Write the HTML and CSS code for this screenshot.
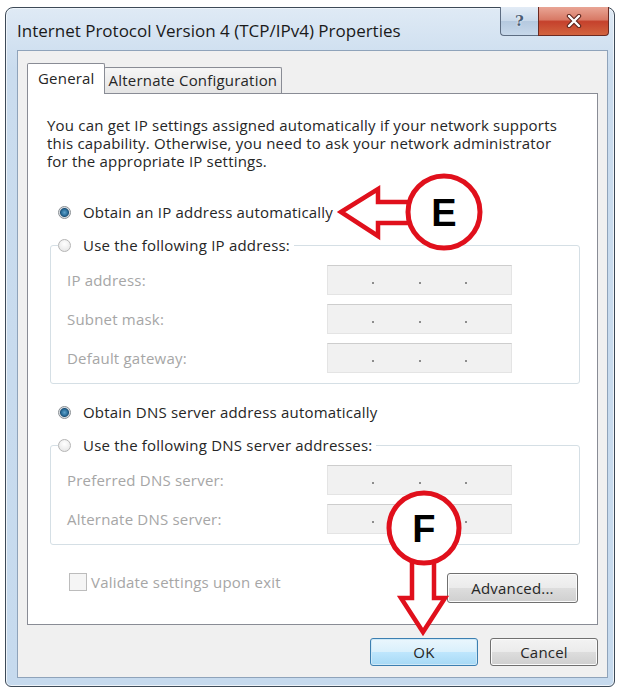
FILE: index.html
```html
<!DOCTYPE html>
<html>
<head>
<meta charset="utf-8">
<link rel="stylesheet" href="styles.css">
</head>
<body>
<div class="window">
  <div class="titlebar">
    <span class="title">Internet Protocol Version 4 (TCP/IPv4) Properties</span>
    <div class="caption">
      <div class="cbtn help"><span>?</span></div>
      <div class="cbtn close">
        <svg width="16" height="14" viewBox="0 0 16 14"><path d="M3 2 L13 12 M13 2 L3 12" stroke="#5a231c" stroke-width="4.4" stroke-linecap="round"/><path d="M3 2 L13 12 M13 2 L3 12" stroke="#fff" stroke-width="2.4" stroke-linecap="round"/></svg>
      </div>
    </div>
  </div>
  <div class="client">
    <div class="tabs">
      <div class="tab active">General</div>
      <div class="tab">Alternate Configuration</div>
    </div>
    <div class="panel">
      <p class="intro">You can get IP settings assigned automatically if your network supports<br>this capability. Otherwise, you need to ask your network administrator<br>for the appropriate IP settings.</p>
      <div class="opt"><span class="radio on"></span>Obtain an IP address automatically</div>
      <fieldset class="group">
        <legend><span class="radio"></span>Use the following IP address:</legend>
        <div class="row first"><span class="lbl">IP address:</span><div class="ip"><i></i><i></i><i></i></div></div>
        <div class="row"><span class="lbl">Subnet mask:</span><div class="ip"><i></i><i></i><i></i></div></div>
        <div class="row"><span class="lbl">Default gateway:</span><div class="ip"><i></i><i></i><i></i></div></div>
      </fieldset>
      <div class="opt dns"><span class="radio on"></span>Obtain DNS server address automatically</div>
      <fieldset class="group">
        <legend><span class="radio"></span>Use the following DNS server addresses:</legend>
        <div class="row first"><span class="lbl">Preferred DNS server:</span><div class="ip"><i></i><i></i><i></i></div></div>
        <div class="row"><span class="lbl">Alternate DNS server:</span><div class="ip"><i></i><i></i><i></i></div></div>
      </fieldset>
      <div class="bottom">
        <div class="check"><span class="box"></span>Validate settings upon exit</div>
        <button class="btn adv">Advanced...</button>
      </div>
    </div>
    <div class="footer">
      <button class="btn ok">OK</button>
      <button class="btn">Cancel</button>
    </div>
  </div>
</div>
<svg class="annot" width="618" height="690" viewBox="0 0 618 690">
  <g fill="#fff" stroke="#e0101c" stroke-width="4.5" stroke-linejoin="miter">
    <polygon points="341,212 378,189 378,202 410,202 410,223 378,223 378,236"/>
    <circle cx="444" cy="212" r="36" stroke-width="5"/>
    <polygon points="412,560 434,560 434,598 445,598 423,632 401,598 412,598"/>
    <circle cx="424" cy="528" r="35" stroke-width="5"/>
  </g>
  <text x="444" y="226" class="mark">E</text>
  <text x="424" y="542" class="mark">F</text>
</svg>
</body>
</html>
```
FILE: styles.css
```css
* { box-sizing: border-box; }
body {
  margin: 0;
  width: 618px;
  height: 690px;
  background: #fff;
  font-family: "Open Sans", "Noto Sans", sans-serif;
  font-size: 15px;
  letter-spacing: 0.2px;
  color: #262626;
  position: relative;
  overflow: hidden;
}
.window {
  margin: 7px 0 0 5px;
  width: 610px;
  height: 680px;
  border: 1px solid #3d4a58;
  border-radius: 8px 8px 6px 6px;
  background: linear-gradient(#dfeaf5, #cadcee 60px, #c6daee);
  padding: 0 6px 8px 11px;
  display: flex;
  flex-direction: column;
  box-shadow: inset 0 0 0 1px #eef4fa;
}
.titlebar {
  height: 42px;
  display: flex;
  align-items: flex-start;
  justify-content: space-between;
}
.title {
  margin-top: 12px;
  font-size: 17px;
  letter-spacing: 0;
  line-height: 22px;
  color: #1a1a1a;
}
.caption {
  display: flex;
  margin-top: -1px;
  margin-right: -1px;
}
.cbtn {
  height: 29px;
  display: flex;
  align-items: center;
  justify-content: center;
  border: 1px solid #5d6d82;
  border-top: none;
}
.help {
  width: 38px;
  border-radius: 0 0 0 4px;
  border-right: none;
  background: linear-gradient(#e3ecf6, #c9d9ea 50%, #b5c9df 51%, #c7d8ea);
}
.help span {
  font-family: "DejaVu Serif", serif;
  font-weight: bold;
  font-size: 15px;
  color: #4c5f76;
  text-shadow: 0 0 2px #fff;
}
.close {
  width: 71px;
  border-radius: 0 0 4px 0;
  border-color: #6b2a22;
  background: linear-gradient(#e9a595, #d87a66 45%, #c5412c 52%, #d2643f);
}
.client {
  flex: 1;
  background: #f0f0f0;
  border: 1px solid #8fa3ba;
  padding: 12px 9px 11px;
  display: flex;
  flex-direction: column;
}
.tabs {
  display: flex;
  align-items: flex-end;
  height: 30px;
  position: relative;
  z-index: 1;
}
.tab {
  height: 26px;
  padding: 0 4px;
  border: 1px solid #898c95;
  border-bottom: none;
  background: linear-gradient(#f6f6f6, #e4e4e4);
  line-height: 24px;
  margin-left: -1px;
  color: #262626;
  border-radius: 2px 2px 0 0;
  white-space: nowrap;
}
.tab.active {
  height: 31px;
  margin-bottom: -1px;
  margin-left: 0;
  padding: 2px 9px 0 10px;
  background: #fff;
}
.panel {
  height: 532px;
  background: #fff;
  border: 1px solid #898c95;
  padding: 22px 19px 0 19px;
}
.intro {
  margin: 0;
  line-height: 18px;
  white-space: nowrap;
}
.opt {
  display: flex;
  align-items: center;
  height: 18px;
  padding-left: 11px;
  margin-top: 33px;
}
.opt.dns { margin-top: 19px; }
.radio {
  flex: none;
  width: 13px;
  height: 13px;
  border-radius: 50%;
  margin-right: 12px;
  border: 1px solid #b5b5b5;
  background: radial-gradient(circle at 50% 35%, #ffffff, #e2e2e2);
}
.radio.on {
  border-color: #8a8f94;
  background: radial-gradient(circle, #5fa2cc 0, #2b6f9c 3px, #1c5077 4px, #d6dbe0 5px, #eef0f2 6px);
}
.group {
  margin: 15px -2px 0 3px;
  padding: 0 0 10px 7px;
  border: 1px solid #d5dfe5;
  border-radius: 3px;
  min-width: 0;
}
.group legend {
  display: flex;
  align-items: center;
  height: 18px;
  padding: 0 4px 0 0;
}
.row {
  display: flex;
  align-items: center;
  height: 30px;
  padding-left: 9px;
  margin-top: 9px;
}
.row.first { margin-top: 11px; }
.lbl {
  width: 260px;
  color: #a6a6a6;
}
.ip {
  width: 185px;
  height: 30px;
  background: #f1f1f1;
  border: 1px solid #e4e4e4;
  border-top-color: #cdcdcd;
  display: flex;
  justify-content: space-evenly;
  align-items: center;
  padding-top: 6px;
}
.ip i {
  width: 2px;
  height: 2px;
  background: #8d8d8d;
}
.bottom {
  display: flex;
  justify-content: space-between;
  align-items: flex-start;
  margin-top: 28px;
  padding-left: 22px;
}
.check {
  display: flex;
  align-items: center;
  height: 18px;
  color: #a6a6a6;
}
.box {
  width: 18px;
  height: 18px;
  border: 1px solid #bcbcbc;
  background: #f5f5f5;
  margin-right: 4px;
}
.btn {
  font-family: inherit;
  font-size: 15px;
  letter-spacing: 0.2px;
  color: #262626;
  border: 1px solid #707070;
  border-radius: 3px;
  background: linear-gradient(#f3f3f3, #ebebeb 50%, #dddddd 51%, #cfcfcf);
  box-shadow: inset 0 0 0 1px #fbfbfb;
  padding: 0;
}
.adv {
  width: 131px;
  height: 30px;
}
.footer {
  display: flex;
  justify-content: flex-end;
  gap: 12px;
  margin-top: 13px;
}
.footer .btn {
  width: 108px;
  height: 28px;
}
.btn.ok {
  border-color: #3c7fb1;
  background: linear-gradient(#eaf6fd, #d9f0fc 50%, #bee6fd 51%, #a7d9f5);
  box-shadow: inset 0 0 0 1px #cfe9f7;
}
.annot {
  position: absolute;
  left: 0;
  top: 0;
  pointer-events: none;
}
.mark {
  font-family: "Liberation Sans", sans-serif;
  font-weight: bold;
  font-size: 38px;
  text-anchor: middle;
  fill: #000;
}
```
